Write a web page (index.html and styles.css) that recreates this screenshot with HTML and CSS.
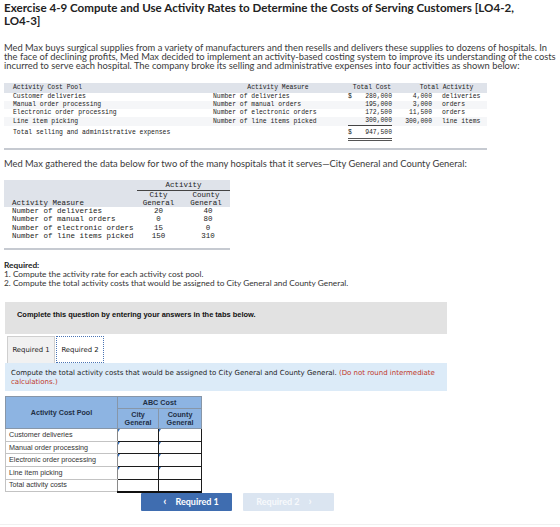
FILE: index.html
```html
<!DOCTYPE html>
<html lang="en">
<head>
<meta charset="utf-8">
<title>Exercise 4-9</title>
<link rel="stylesheet" href="styles.css">
</head>
<body>
<div class="page">
  <h1 class="title">Exercise 4-9 Compute and Use Activity Rates to Determine the Costs of Serving Customers [LO4-2, LO4-3]</h1>

  <p class="intro intro-first">Med Max buys surgical supplies from a variety of manufacturers and then resells and delivers these supplies to dozens of hospitals. In the face of declining profits, Med Max decided to implement an activity-based costing system to improve its understanding of the costs incurred to serve each hospital. The company broke its selling and administrative expenses into four activities as shown below:</p>

  <table class="mono costs">
    <colgroup>
      <col class="c-pool"><col class="c-measure"><col class="c-cost"><col class="c-qty"><col class="c-unit">
    </colgroup>
    <thead>
      <tr>
        <th class="pool">Activity Cost Pool</th>
        <th class="center">Activity Measure</th>
        <th class="center">Total Cost</th>
        <th class="activity-head" colspan="2">Total Activity</th>
      </tr>
    </thead>
    <tbody>
      <tr>
        <td class="pool">Customer deliveries</td>
        <td class="measure">Number of deliveries</td>
        <td class="cost"><span class="money"><span>$</span><span>280,000</span></span></td>
        <td class="qty">4,000</td>
        <td class="unit">deliveries</td>
      </tr>
      <tr class="shade">
        <td class="pool">Manual order processing</td>
        <td class="measure">Number of manual orders</td>
        <td class="cost"><span class="money"><span></span><span>195,000</span></span></td>
        <td class="qty">3,000</td>
        <td class="unit">orders</td>
      </tr>
      <tr>
        <td class="pool">Electronic order processing</td>
        <td class="measure">Number of electronic orders</td>
        <td class="cost"><span class="money"><span></span><span>172,500</span></span></td>
        <td class="qty">11,500</td>
        <td class="unit">orders</td>
      </tr>
      <tr class="shade">
        <td class="pool">Line item picking</td>
        <td class="measure">Number of line items picked</td>
        <td class="cost"><span class="money underline"><span></span><span>300,000</span></span></td>
        <td class="qty">300,000</td>
        <td class="unit">line items</td>
      </tr>
      <tr class="total">
        <td class="pool">Total selling and administrative expenses</td>
        <td></td>
        <td class="cost"><span class="money double"><span>$</span><span>947,500</span></span></td>
        <td></td>
        <td></td>
      </tr>
      <tr class="closing"><td colspan="5"></td></tr>
    </tbody>
  </table>

  <p class="intro intro-second">Med Max gathered the data below for two of the many hospitals that it serves—City General and County General:</p>

  <table class="mono hospitals">
    <colgroup>
      <col class="h-measure"><col class="h-city"><col class="h-county">
    </colgroup>
    <thead>
      <tr class="group-row">
        <th class="measure-head" rowspan="2">Activity Measure</th>
        <th class="group-head" colspan="2">Activity</th>
      </tr>
      <tr class="name-row">
        <th class="center">City<br>General</th>
        <th class="center county">County<br>General</th>
      </tr>
    </thead>
    <tbody>
      <tr><td class="name">Number of deliveries</td><td class="center">20</td><td class="center county">40</td></tr>
      <tr><td class="name">Number of manual orders</td><td class="center">0</td><td class="center county">80</td></tr>
      <tr><td class="name">Number of electronic orders</td><td class="center">15</td><td class="center county">0</td></tr>
      <tr><td class="name">Number of line items picked</td><td class="center">150</td><td class="center county">310</td></tr>
      <tr class="closing"><td colspan="3"></td></tr>
    </tbody>
  </table>

  <div class="required">
    <strong>Required:</strong>
    <p>1. Compute the activity rate for each activity cost pool.</p>
    <p>2. Compute the total activity costs that would be assigned to City General and County General.</p>
  </div>

  <div class="notice">Complete this question by entering your answers in the tabs below.</div>

  <div class="tabs">
    <button class="tab">Required 1</button>
    <button class="tab active">Required 2</button>
  </div>

  <div class="instruction">Compute the total activity costs that would be assigned to City General and County General. <span class="hint">(Do not round intermediate calculations.)</span></div>

  <table class="answer">
    <colgroup>
      <col class="a-pool"><col class="a-city"><col class="a-county">
    </colgroup>
    <thead>
      <tr class="head-top">
        <th rowspan="2">Activity Cost Pool</th>
        <th colspan="2">ABC Cost</th>
      </tr>
      <tr class="head-sub">
        <th>City<br>General</th>
        <th>County<br>General</th>
      </tr>
    </thead>
    <tbody>
      <tr><td class="label">Customer deliveries</td><td class="input marked"></td><td class="input marked"></td></tr>
      <tr><td class="label">Manual order processing</td><td class="input marked"></td><td class="input marked"></td></tr>
      <tr><td class="label">Electronic order processing</td><td class="input marked"></td><td class="input marked"></td></tr>
      <tr><td class="label">Line item picking</td><td class="input marked"></td><td class="input marked"></td></tr>
      <tr class="sum"><td class="label">Total activity costs</td><td class="input"></td><td class="input"></td></tr>
    </tbody>
  </table>

  <div class="nav">
    <button class="nav-btn prev"><span class="chev">‹</span>Required 1</button>
    <button class="nav-btn next">Required 2<span class="chev">›</span></button>
  </div>

  <div class="footer-rule"></div>
</div>
</body>
</html>
```

FILE: styles.css
```css
html, body {
  margin: 0;
  padding: 0;
  background: #fff;
}

.page {
  padding: 2px 0 0 4px;
  width: 552px;
  font-family: Lato, "Open Sans", sans-serif;
  color: #333;
}

.title {
  margin: 0;
  max-width: 512px;
  font-size: 11.6px;
  line-height: 12.5px;
  font-weight: 700;
  color: #222;
}

.intro {
  margin: 0;
  font-size: 9.35px;
  line-height: 9px;
  color: #3a3a3a;
}

.intro-first {
  margin-top: 16px;
}

.intro-second {
  margin-top: 9px;
}

/* ---------- monospace data tables ---------- */
.mono {
  border-collapse: collapse;
  font-family: "Liberation Mono", "Courier New", monospace;
  color: #222;
  table-layout: fixed;
}

.mono th, .mono td {
  padding: 0;
  font-weight: 400;
  white-space: nowrap;
}

.center { text-align: center; }

/* activity cost table */
.costs {
  margin-top: 13px;
  width: 483px;
  font-size: 6.4px;
  line-height: 8px;
}

.costs .c-pool { width: 206px; }
.costs .c-measure { width: 136px; }
.costs .c-cost { width: 52px; }
.costs .c-qty { width: 36px; }
.costs .c-unit { width: 53px; }

.costs thead tr {
  background: #dfe3ea;
  height: 10px;
}

.costs th { vertical-align: bottom; padding-bottom: 1px; }
.costs .pool { padding-left: 9px; text-align: left; }
.costs .measure { padding-left: 3px; }
.costs .activity-head { text-align: center; padding-left: 8px; }
.costs tbody tr { height: 8px; }
.costs tbody tr.shade { background: #f5f6f8; }

.costs .cost { padding: 0 6px 0 2px; }
.money {
  display: flex;
  justify-content: space-between;
}
.money.underline { border-bottom: 1px solid #444; }
.money.double {
  border-bottom: 3px double #555;
  padding-bottom: 1px;
}

.costs .qty { text-align: right; padding-right: 2px; }
.costs .unit { padding-left: 8px; }

.costs tbody tr.total { height: 15px; }
.costs tr.total td { vertical-align: top; padding-top: 3px; }

.mono tr.closing td {
  height: 3px;
  border-bottom: 2px solid #c6cad1;
  background: #fff;
}

/* hospital activity table */
.hospitals {
  margin-top: 12px;
  width: 226px;
  font-size: 7.5px;
  line-height: 8.3px;
}

.hospitals .h-measure { width: 133px; }
.hospitals .h-city { width: 43px; }
.hospitals .h-county { width: 50px; }

.hospitals thead { background: #dfe3ea; }
.hospitals .group-row { height: 10px; }
.hospitals .name-row { height: 16.6px; }
.hospitals .measure-head {
  text-align: left;
  vertical-align: bottom;
  padding-left: 8px;
}
.hospitals .group-head {
  text-align: center;
  vertical-align: bottom;
  border-bottom: 1px solid #444;
}
.hospitals tbody tr { height: 8.3px; }
.hospitals .name { padding-left: 8px; }
.hospitals td.county { padding-left: 6px; }
.hospitals th.county { padding-left: 2px; }
.hospitals tr.closing td { height: 2px; }

/* ---------- requirements ---------- */
.required {
  margin-top: 11px;
  font-size: 8.3px;
  line-height: 9.2px;
  color: #333;
}
.required strong { font-weight: 700; color: #222; }
.required p { margin: 0; }

.notice {
  box-sizing: border-box;
  margin: 14px 0 0 1px;
  width: 442px;
  height: 32px;
  padding: 9px 0 0 12px;
  background: #e2e2e2;
  font-family: "Liberation Sans", Arial, sans-serif;
  font-weight: 700;
  font-size: 7.45px;
  line-height: 8px;
  color: #111;
}

/* ---------- tabs ---------- */
.tabs {
  display: flex;
  margin: 2px 0 0 3px;
  height: 27px;
}

.tab {
  width: 48px;
  height: 27px;
  padding: 0;
  margin: 0;
  font-family: "DejaVu Sans", Verdana, sans-serif;
  font-size: 6.9px;
  color: #222;
  background: #f1f1f1;
  border: 1px solid #cfcfcf;
  border-bottom: none;
}

.tab.active {
  margin-left: 1px;
  background: #fff;
  border: 1px dotted #4a74b4;
}

.instruction {
  box-sizing: border-box;
  margin-left: 1px;
  width: 442px;
  height: 28px;
  padding: 5.5px 2px 0 6px;
  background: #dcebf8;
  font-family: "DejaVu Sans", Verdana, sans-serif;
  font-size: 7px;
  line-height: 9.5px;
  color: #222;
}

.instruction .hint { color: #c0392b; }

/* ---------- answer grid ---------- */
.answer {
  margin: 5px 0 0 1px;
  width: 196px;
  border-collapse: collapse;
  table-layout: fixed;
  font-family: "Liberation Sans", Arial, sans-serif;
  font-size: 7.2px;
  color: #333;
}

.answer .a-pool { width: 112px; }
.answer .a-city { width: 41px; }
.answer .a-county { width: 43px; }

.answer th {
  background: #8db4e2;
  color: #1f2f45;
  font-weight: 700;
  border: 1px solid #8796a8;
  line-height: 7.8px;
  padding: 0;
}

.answer tr.head-top { height: 12px; }
.answer tr.head-sub { height: 20px; }
.answer tbody tr { height: 12.6px; }

.answer td { padding: 0; line-height: 8px; }

.answer .label {
  padding-left: 3px;
  border: 1px solid #c3c3c3;
  border-right-color: #8a8a8a;
}

.answer .input {
  position: relative;
  border: 1px solid #1c1c1c;
  background: #fff;
}

/* small blue corner flag on editable cells */
.answer .input.marked::before {
  content: "";
  position: absolute;
  left: 0;
  top: 0;
  border-top: 3px solid #2f6fc1;
  border-right: 2px solid transparent;
}

.answer tr.sum .input { border-bottom: 2px solid #111; }

/* ---------- navigation ---------- */
.nav {
  display: flex;
  gap: 11px;
  margin: 0 0 0 137px;
}

.nav-btn {
  width: 91px;
  height: 18px;
  padding: 0;
  border: none;
  border-radius: 1px;
  font-family: Lato, "Open Sans", sans-serif;
  font-weight: 700;
  font-size: 9px;
  color: #fff;
  display: flex;
  align-items: center;
  justify-content: center;
}

.nav-btn.prev { background: #3f6db0; }
.nav-btn.next { background: #dbe5f1; color: #f7f9fc; }

.chev {
  font-size: 11px;
  line-height: 1;
  margin: -2px 9px 0;
}

.footer-rule {
  margin: 13px 0 0 -4px;
  width: 560px;
  border-top: 1px solid #f0f0f0;
}
```
